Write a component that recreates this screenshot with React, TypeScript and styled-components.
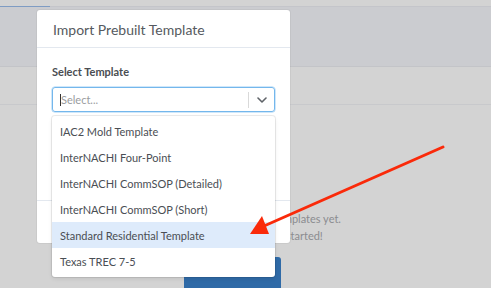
import React from "react";
import styled, { createGlobalStyle } from "styled-components";

const Global = createGlobalStyle`
  html, body { margin: 0; padding: 0; }
  body {
    width: 491px; height: 288px; overflow: hidden;
    background: #d3d3d3;
    font-family: Lato, "Open Sans", "Liberation Sans", sans-serif;
  }
`;

const Page = styled.div`
  position: relative;
  width: 491px;
  height: 288px;
  overflow: hidden;
  display: flex;
  flex-direction: column;
  & > * { flex-shrink: 0; }
`;

const TopStrip = styled.div`
  height: 6px;
  border-bottom: 1px solid #c4c5ca;
  position: relative;
`;

const TabMark = styled.div`
  position: absolute;
  left: 0;
  bottom: -1px;
  width: 50px;
  height: 1px;
  background: #7f9cc3;
`;

const HeaderBand = styled.div`
  height: 59px;
  background: #cbccd0;
  border-bottom: 1px solid #c3c4c8;
`;

const SubBand = styled.div`
  height: 37px;
  border-bottom: 1px solid #c8c9cc;
`;

const Empty = styled.div`
  display: flex;
  flex-direction: column;
  align-items: center;
  padding-top: 107px;
  width: 465px;
  gap: 4px;
`;

const EmptyText = styled.div`
  font-size: 11px;
  line-height: 13px;
  color: #8b8c90;
`;

const PrimaryButton = styled.div`
  margin-top: 11px;
  width: 97px;
  height: 36px;
  border-radius: 3px;
  background: #2f6aa7;
`;

const Modal = styled.div`
  position: absolute;
  left: 37px;
  top: 10px;
  width: 253px;
  height: 233px;
  background: #fff;
  border-radius: 3px;
  box-shadow: 0 0 0 1px rgba(0, 0, 0, 0.04);
  display: flex;
  flex-direction: column;
`;

const ModalHeader = styled.div`
  height: 38px;
  border-bottom: 1px solid #e3e8ef;
  display: flex;
  align-items: center;
  padding: 0 16px;
  box-sizing: border-box;
`;

const Title = styled.div`
  font-size: 14px;
  color: #555a60;
  padding-top: 2px;
`;

const ModalBody = styled.div`
  flex: 1;
  padding: 17px 15px 0 15px;
  display: flex;
  flex-direction: column;
`;

const Label = styled.div`
  font-size: 11px;
  font-weight: 700;
  color: #4a4d52;
  line-height: 14px;
  margin-bottom: 8px;
`;

const SelectBox = styled.div`
  height: 25px;
  box-sizing: border-box;
  border: 1px solid #74b7ec;
  border-radius: 3px;
  display: flex;
  align-items: center;
  box-shadow: 0 0 0 0.5px #9fd0f5;
`;

const Placeholder = styled.div`
  flex: 1;
  font-size: 11px;
  color: #9a9ca0;
  padding-left: 7px;
  display: flex;
  align-items: center;
`;

const Caret = styled.span`
  width: 1px;
  height: 12px;
  background: #333;
`;

const Sep = styled.div`
  width: 1px;
  height: 16px;
  background: #d9d9d9;
`;

const Chevron = styled.div`
  width: 25px;
  display: flex;
  justify-content: center;
  align-items: center;
`;

const ModalFooter = styled.div`
  height: 42px;
  border-top: 1px solid #e3e8ef;
`;

const Menu = styled.div`
  position: absolute;
  left: 52px;
  top: 116px;
  width: 223px;
  box-sizing: border-box;
  background: #fff;
  border-radius: 3px;
  padding: 2px 0 3px;
  box-shadow: 0 0 0 1px rgba(0, 0, 0, 0.08), 0 2px 4px rgba(0, 0, 0, 0.08);
`;

const Option = styled.div<{ $active?: boolean }>`
  height: 26px;
  display: flex;
  align-items: center;
  padding-left: 8px;
  font-size: 11px;
  color: #4a4e54;
  background: ${(p) => (p.$active ? "#deebfb" : "transparent")};
`;

const Arrow = styled.svg`
  position: absolute;
  left: 0;
  top: 0;
  pointer-events: none;
`;

const options = [
  "IAC2 Mold Template",
  "InterNACHI Four-Point",
  "InterNACHI CommSOP (Detailed)",
  "InterNACHI CommSOP (Short)",
  "Standard Residential Template",
  "Texas TREC 7-5",
];

export default function App() {
  return (
    <>
      <Global />
      <Page>
        <TopStrip>
          <TabMark />
        </TopStrip>
        <HeaderBand />
        <SubBand />
        <Empty>
          <EmptyText>You haven't added any custom templates yet.</EmptyText>
          <EmptyText>Import a template now to get started!</EmptyText>
          <PrimaryButton />
        </Empty>

        <Modal>
          <ModalHeader>
            <Title>Import Prebuilt Template</Title>
          </ModalHeader>
          <ModalBody>
            <Label>Select Template</Label>
            <SelectBox>
              <Placeholder>
                <Caret />
                Select...
              </Placeholder>
              <Sep />
              <Chevron>
                <svg width="10" height="6" viewBox="0 0 10 6">
                  <path d="M1 1 L5 5 L9 1" fill="none" stroke="#5f6368" strokeWidth="1.6" strokeLinecap="round" strokeLinejoin="round" />
                </svg>
              </Chevron>
            </SelectBox>
          </ModalBody>
          <ModalFooter />
        </Modal>

        <Menu>
          {options.map((o) => (
            <Option key={o} $active={o === "Standard Residential Template"}>
              {o}
            </Option>
          ))}
        </Menu>

        <Arrow width="491" height="288" viewBox="0 0 491 288">
          <line x1="443" y1="147" x2="264" y2="226" stroke="#fa2a0a" strokeWidth="3" strokeLinecap="round" />
          <polygon points="250,234 262,216 269,234" fill="#fa2a0a" />
        </Arrow>
      </Page>
    </>
  );
}
